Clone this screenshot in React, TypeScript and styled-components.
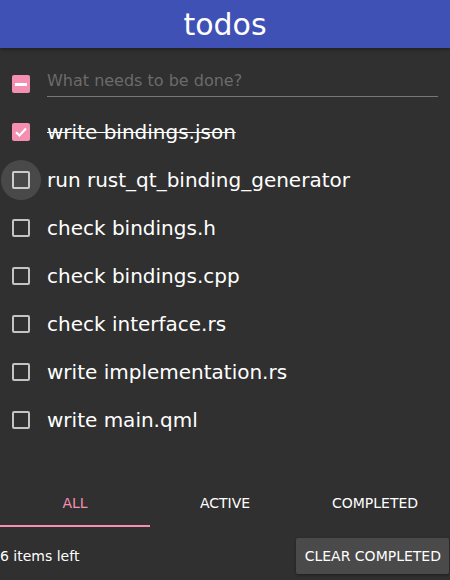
import React from "react";
import styled, { createGlobalStyle, css } from "styled-components";

const Global = createGlobalStyle`
  html, body { margin: 0; padding: 0; background: #303030; }
  body { font-family: "DejaVu Sans", "Liberation Sans", sans-serif; color: #ffffff; }
`;

const Page = styled.div`
  width: 450px;
  height: 580px;
  display: flex;
  flex-direction: column;
  background: #303030;
  overflow: hidden;
`;

const Header = styled.header`
  height: 48px;
  flex: none;
  background: #3f51b5;
  display: flex;
  align-items: center;
  justify-content: center;
  font-size: 30px;
  color: #ffffff;
  box-shadow: 0 1px 4px rgba(0, 0, 0, 0.45);
  position: relative;
  z-index: 1;
`;

const List = styled.div`
  padding-top: 12px;
  display: flex;
  flex-direction: column;
  flex: 1;
`;

const Row = styled.div`
  height: 48px;
  display: flex;
  align-items: center;
  padding-left: 12px;
  padding-right: 12px;
  gap: 17px;
`;

type BoxState = "checked" | "unchecked" | "partial";

const Box = styled.span<{ $state: BoxState; $hover?: boolean }>`
  position: relative;
  flex: none;
  width: 18px;
  height: 18px;
  box-sizing: border-box;
  border-radius: 2px;
  display: flex;
  align-items: center;
  justify-content: center;
  ${(p) =>
    p.$state === "unchecked"
      ? css`
          border: 2px solid #c4c4c4;
        `
      : css`
          background: #f48fb1;
        `}
  ${(p) =>
    p.$hover &&
    css`
      &::before {
        content: "";
        position: absolute;
        left: 50%;
        top: 50%;
        width: 40px;
        height: 40px;
        margin-left: -20px;
        margin-top: -20px;
        border-radius: 50%;
        background: rgba(255, 255, 255, 0.12);
      }
    `}
`;

const Minus = styled.span`
  width: 12px;
  height: 3px;
  background: #ffffff;
`;

const InputWrap = styled.div`
  flex: 1;
  height: 48px;
  display: flex;
  align-items: flex-end;
`;

const Field = styled.div`
  flex: 1;
  height: 30px;
  margin-bottom: 11px;
  border-bottom: 1px solid #777777;
  display: flex;
  align-items: center;
  font-size: 16px;
  color: #6b6b6b;
  padding-bottom: 2px;
  box-sizing: border-box;
`;

const Label = styled.span<{ $done?: boolean }>`
  font-size: 20px;
  color: #ffffff;
  white-space: nowrap;
  text-decoration: ${(p) => (p.$done ? "line-through" : "none")};
  text-decoration-thickness: 1px;
`;

const Tabs = styled.div`
  height: 48px;
  flex: none;
  display: grid;
  grid-template-columns: repeat(3, 150px);
`;

const Tab = styled.div<{ $active?: boolean }>`
  display: flex;
  align-items: center;
  justify-content: center;
  font-size: 14px;
  box-sizing: border-box;
  color: ${(p) => (p.$active ? "#f48fb1" : "#ffffff")};
  border-bottom: 2px solid ${(p) => (p.$active ? "#f48fb1" : "transparent")};
  margin-bottom: 1px;
`;

const Footer = styled.div`
  height: 52px;
  flex: none;
  display: flex;
  align-items: center;
  justify-content: space-between;
  font-size: 14px;
  padding-right: 1px;
  padding-top: 3px;
  box-sizing: border-box;
`;

const Button = styled.button`
  height: 36px;
  padding: 0 8px 0 9px;
  border: none;
  border-radius: 2px;
  background: #4a4a4a;
  color: #ffffff;
  font-family: inherit;
  font-size: 14px;
  box-shadow: 0 1px 3px rgba(0, 0, 0, 0.4);
`;

const Check = () => (
  <svg width="14" height="14" viewBox="0 0 14 14">
    <path d="M2 7.2 L5.4 10.4 L12 3.6" stroke="#fff" strokeWidth="2.2" fill="none" />
  </svg>
);

const todos: { text: string; done: boolean }[] = [
  { text: "write bindings.json", done: true },
  { text: "run rust_qt_binding_generator", done: false },
  { text: "check bindings.h", done: false },
  { text: "check bindings.cpp", done: false },
  { text: "check interface.rs", done: false },
  { text: "write implementation.rs", done: false },
  { text: "write main.qml", done: false },
];

export default function App() {
  return (
    <Page>
      <Global />
      <Header>todos</Header>
      <List>
        <Row>
          <Box $state="partial">
            <Minus />
          </Box>
          <InputWrap>
            <Field>What needs to be done?</Field>
          </InputWrap>
        </Row>
        {todos.map((t, i) => (
          <Row key={t.text}>
            <Box $state={t.done ? "checked" : "unchecked"} $hover={i === 1}>
              {t.done && <Check />}
            </Box>
            <Label $done={t.done}>{t.text}</Label>
          </Row>
        ))}
      </List>
      <Tabs>
        <Tab $active>ALL</Tab>
        <Tab>ACTIVE</Tab>
        <Tab>COMPLETED</Tab>
      </Tabs>
      <Footer>
        <span>6 items left</span>
        <Button>CLEAR COMPLETED</Button>
      </Footer>
    </Page>
  );
}
